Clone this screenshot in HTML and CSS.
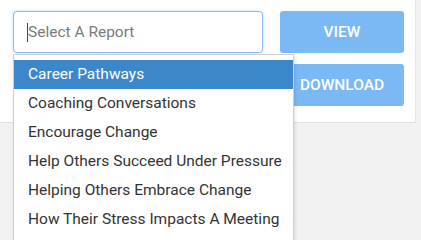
FILE: index.html
```html
<!DOCTYPE html>
<html>
<head>
<meta charset="utf-8">
<link rel="stylesheet" href="styles.css">
</head>
<body>
<div class="card">
  <div class="row">
    <div class="select-wrap">
      <div class="select-input"><span class="caret"></span><span class="placeholder">Select A Report</span></div>
      <ul class="dropdown">
        <li class="active">Career Pathways</li>
        <li>Coaching Conversations</li>
        <li>Encourage Change</li>
        <li>Help Others Succeed Under Pressure</li>
        <li>Helping Others Embrace Change</li>
        <li>How Their Stress Impacts A Meeting</li>
      </ul>
    </div>
    <div class="buttons">
      <div class="btn">VIEW</div>
      <div class="btn">DOWNLOAD</div>
    </div>
  </div>
</div>
</body>
</html>
```
FILE: styles.css
```css
html, body {
  margin: 0;
  padding: 0;
}
body {
  background: #f2f2f2;
  font-family: Roboto, "Liberation Sans", sans-serif;
  width: 421px;
  height: 240px;
  overflow: hidden;
}
.card {
  width: 416px;
  height: 123px;
  background: #ffffff;
  border-right: 1px solid #e6e6e6;
  border-bottom: 1px solid #dedede;
  box-sizing: border-box;
  padding: 11px 0 0 13px;
}
.row {
  display: flex;
  gap: 17px;
}
.select-wrap {
  position: relative;
  width: 250px;
}
.select-input {
  height: 42px;
  box-sizing: border-box;
  border: 1px solid #8bbcec;
  border-radius: 4px;
  box-shadow: 0 0 3px rgba(102, 175, 233, 0.45);
  display: flex;
  align-items: center;
  padding-left: 13px;
  background: #fff;
}
.caret {
  width: 1px;
  height: 19px;
  background: #444;
}
.placeholder {
  color: #7a7a7a;
  font-size: 15.5px;
}
.dropdown {
  position: absolute;
  top: 43px;
  left: 0;
  width: 281px;
  margin: 0;
  padding: 5px 0 0 0;
  list-style: none;
  background: #fff;
  border: 1px solid #d0d0d0;
  box-sizing: border-box;
  box-shadow: 1px 2px 4px rgba(0, 0, 0, 0.12);
  height: 200px;
  overflow: hidden;
}
.dropdown li {
  height: 29px;
  line-height: 29px;
  padding-left: 14px;
  font-size: 15.5px;
  color: #333;
  white-space: nowrap;
}
.dropdown li.active {
  background: #3c87c9;
  color: #fff;
}
.buttons {
  display: flex;
  flex-direction: column;
  gap: 11px;
  width: 124px;
}
.btn {
  height: 42px;
  border-radius: 3px;
  background: #7bb9f5;
  color: #fff;
  font-weight: 500;
  font-size: 15.5px;
  display: flex;
  align-items: center;
  justify-content: center;
}
```
